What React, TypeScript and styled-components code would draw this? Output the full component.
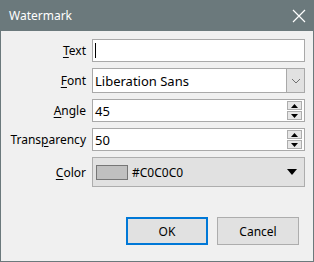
import React from 'react';
import styled, { createGlobalStyle } from 'styled-components';

const GlobalStyle = createGlobalStyle`
  html, body {
    margin: 0;
    padding: 0;
    background: #f0f0f0;
  }
  body {
    font-family: "Noto Sans", "DejaVu Sans", sans-serif;
    font-size: 12px;
    color: #000;
  }
`;

const Window = styled.div`
  width: 314px;
  height: 262px;
  box-sizing: border-box;
  border: 1px solid #6b797c;
  border-top: none;
  background: #f0f0f0;
  display: flex;
  flex-direction: column;
`;

const TitleBar = styled.div`
  height: 31px;
  margin: 0 -1px;
  background: #6b797c;
  display: flex;
  align-items: center;
  justify-content: space-between;
  padding: 0 8px 0 9px;
  color: #fff;
  font-size: 12px;
  flex-shrink: 0;
`;

const CloseIcon = () => (
  <svg width="14" height="14" viewBox="0 0 14 14">
    <path d="M1 1 L13 13 M13 1 L1 13" stroke="#fff" strokeWidth="1.2" fill="none" />
  </svg>
);

const Form = styled.div`
  display: grid;
  grid-template-columns: 77px 213px;
  grid-template-rows: 23px 25px 23px 23px 30px;
  column-gap: 6px;
  row-gap: 6px;
  padding: 8px 0 0 8px;
  align-items: center;
`;

const Label = styled.label`
  text-align: right;
  white-space: nowrap;
  color: #000;
  u {
    text-decoration-thickness: 1px;
    text-underline-offset: 2px;
  }
`;

const FieldBox = styled.div`
  height: 100%;
  box-sizing: border-box;
  border: 1px solid #a9a9a9;
  background: #fff;
  display: flex;
  align-items: center;
  padding-left: 2px;
  font-size: 13px;
  position: relative;
`;

const Caret = styled.span`
  width: 1px;
  height: 15px;
  background: #000;
`;

const DropButton = styled.div`
  margin-left: auto;
  width: 18px;
  height: 100%;
  box-sizing: border-box;
  border-left: 1px solid #a9a9a9;
  background: #e1e1e1;
  display: flex;
  align-items: center;
  justify-content: center;
`;

const Spinner = styled.div`
  margin-left: auto;
  margin-right: 2px;
  width: 15px;
  height: 19px;
  display: flex;
  flex-direction: column;
  gap: 1px;
`;

const SpinButton = styled.div`
  flex: 1;
  box-sizing: border-box;
  border: 1px solid #adadad;
  background: #e6e6e6;
  display: flex;
  align-items: center;
  justify-content: center;
`;

const ColorButton = styled.div`
  height: 100%;
  box-sizing: border-box;
  border: 1px solid #adadad;
  background: #e1e1e1;
  display: flex;
  align-items: center;
  padding: 0 7px 0 3px;
  gap: 4px;
  font-size: 12px;
`;

const Swatch = styled.span<{ $color: string }>`
  width: 32px;
  height: 15px;
  box-sizing: border-box;
  border: 1px solid #767676;
  background: ${(p) => p.$color};
`;

const Arrow = styled.span`
  margin-left: auto;
  width: 0;
  height: 0;
  border-left: 5px solid transparent;
  border-right: 5px solid transparent;
  border-top: 6px solid #000;
`;

const Footer = styled.div`
  display: flex;
  justify-content: flex-end;
  gap: 9px;
  padding: 30px 14px 0 0;
`;

const Button = styled.button<{ $default?: boolean }>`
  width: 82px;
  height: 28px;
  box-sizing: border-box;
  background: #e1e1e1;
  border: ${(p) => (p.$default ? '2px solid #0078d7' : '1px solid #adadad')};
  font-family: "Noto Sans", "DejaVu Sans", sans-serif;
  font-size: 12px;
  color: #000;
  padding: 0;
`;

const Chevron = () => (
  <svg width="10" height="6" viewBox="0 0 10 6">
    <path d="M1 1 L5 5 L9 1" stroke="#707070" strokeWidth="1" fill="none" />
  </svg>
);

const Tri = ({ up }: { up?: boolean }) => (
  <svg width="7" height="4" viewBox="0 0 7 4">
    <path d={up ? 'M0 4 L3.5 0 L7 4 Z' : 'M0 0 L3.5 4 L7 0 Z'} fill="#000" />
  </svg>
);

const SpinBox = ({ value }: { value: string }) => (
  <FieldBox>
    {value}
    <Spinner>
      <SpinButton><Tri up /></SpinButton>
      <SpinButton><Tri /></SpinButton>
    </Spinner>
  </FieldBox>
);

export default function App() {
  return (
    <>
      <GlobalStyle />
      <Window>
        <TitleBar>
          <span>Watermark</span>
          <CloseIcon />
        </TitleBar>
        <Form>
          <Label><u>T</u>ext</Label>
          <FieldBox><Caret /></FieldBox>

          <Label><u>F</u>ont</Label>
          <FieldBox>
            Liberation Sans
            <DropButton><Chevron /></DropButton>
          </FieldBox>

          <Label><u>A</u>ngle</Label>
          <SpinBox value="45" />

          <Label>Trans<u>p</u>arency</Label>
          <SpinBox value="50" />

          <Label><u>C</u>olor</Label>
          <ColorButton>
            <Swatch $color="#c0c0c0" />
            #C0C0C0
            <Arrow />
          </ColorButton>
        </Form>
        <Footer>
          <Button $default>OK</Button>
          <Button>Cancel</Button>
        </Footer>
      </Window>
    </>
  );
}
